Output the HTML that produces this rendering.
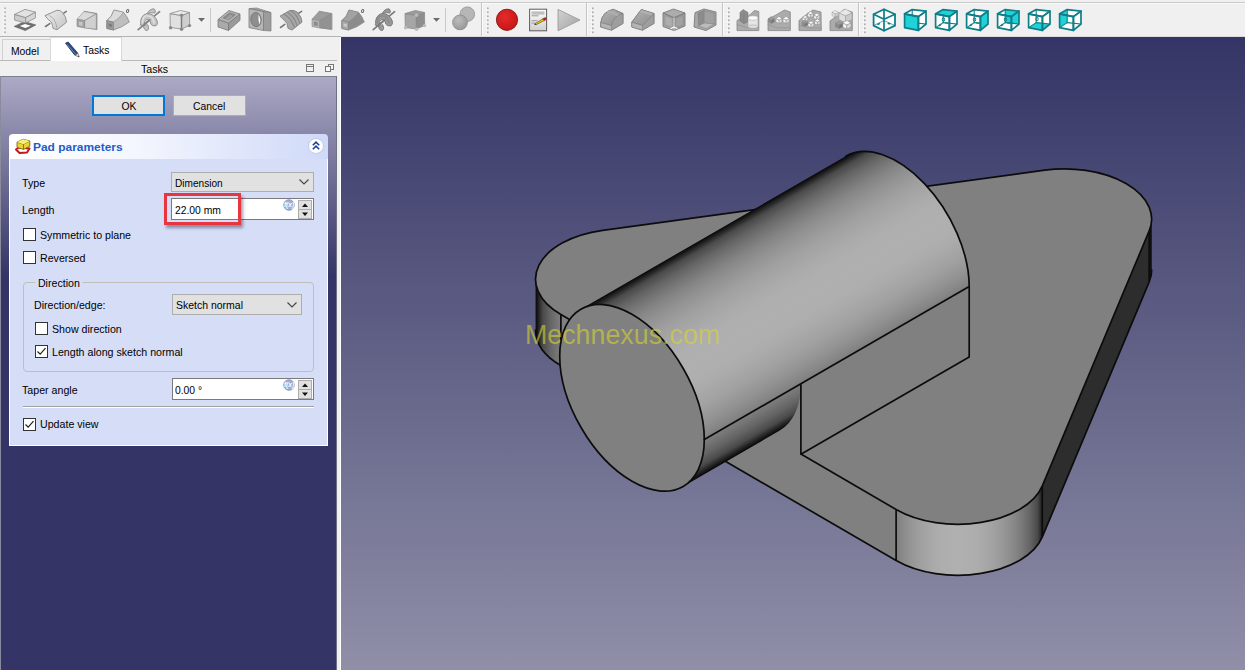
<!DOCTYPE html>
<html lang="en"><head><meta charset="utf-8"><title>FreeCAD - Pad parameters</title>
<style>
html,body{margin:0;padding:0}
body{width:1245px;height:670px;overflow:hidden;position:relative;background:#f0f0f0;font-family:"Liberation Sans",sans-serif;font-size:11px;color:#000}
.abs{position:absolute}
#toolbar{left:0;top:0;width:1245px;height:36px;background:#f0f0f0}
#tbline{left:0;top:36px;width:341px;height:1px;background:#b4b4b4}
#tbline2{left:341px;top:36px;width:904px;height:1px;background:#dcdcdc}
#view{left:341px;top:37px;width:904px;height:633px;background:linear-gradient(#343466,#8f8fa8)}
#panel{left:0;top:76px;width:337px;height:594px;background:linear-gradient(#acaac5 0px,#343466 200px,#343466 100%)}
</style></head><body>
<style>
.btn{background:#e1e1e1;text-align:center;line-height:18px;box-sizing:content-box}
.combo{background:#e1e1e1;border:1px solid #adadad}
.spin{background:#fff;border:1px solid #7a7a7a}
.sbtn{width:12px;height:8px;background:#e1e1e1;border:1px solid #adadad;line-height:0}
.cb{width:11px;height:11px;background:#fff;border:1px solid #333;line-height:0}
.abs span{white-space:nowrap}
div.abs{white-space:nowrap}
.t{transform:scaleX(.967);transform-origin:0 50%}
span.t{transform:scaleX(.94)}
.tc{display:inline-block;transform:scaleX(.94)}
</style>
<div id="toolbar" class="abs"></div>
<div id="tbline" class="abs"></div><div id="tbline2" class="abs"></div>
<!-- tabs -->
<div class="abs" style="left:0;top:60px;width:337px;height:1px;background:#b9b9b9"></div>
<div class="abs tab" style="left:2px;top:39px;width:47px;height:20px;background:#f0f0f0;border:1px solid #d0d0d0;border-bottom:none"><span class="abs t" style="left:8px;top:5px">Model</span></div>
<div class="abs tab" style="left:50px;top:37px;width:70px;height:23px;background:#fff;border:1px solid #d9d9d9;border-bottom:none"><span class="abs t" style="left:32px;top:6px">Tasks</span>
<svg class="abs" style="left:12px;top:3px" width="18" height="18" viewBox="0 0 18 18"><path d="M2.5 2.2 L5.2 1 L14.8 12.2 L12 14.4 Z" fill="#2f4b7c" stroke="#1b2c4f" stroke-width=".8"/><path d="M12 14.4 L14.8 12.2 L16.3 16 Z" fill="#e9e1cf" stroke="#555" stroke-width=".6"/><path d="M15.2 14.6 L16.3 16 L14.8 15.6Z" fill="#222"/><path d="M4 3.2 L12.8 13.4" stroke="#6d8cc2" stroke-width=".9"/></svg></div>
<!-- dock title -->
<div class="abs t" style="left:141px;top:63px;width:40px;text-align:left">Tasks</div>
<svg class="abs" style="left:304px;top:62px" width="32" height="12" viewBox="0 0 32 12"><rect x="2.5" y="2.5" width="7" height="7" fill="none" stroke="#777" stroke-width="1"/><path d="M2.5 4.5H9.5" stroke="#777"/><rect x="24.5" y="2.5" width="5" height="5" fill="#f4f4f4" stroke="#777"/><rect x="21.5" y="4.5" width="5" height="5" fill="#f8f8f8" stroke="#777"/></svg>
<!-- task panel -->
<div id="panel" class="abs"></div>
<div class="abs" style="left:0;top:76px;width:337px;height:1px;background:#7c7f8c"></div>
<div class="abs" style="left:0;top:76px;width:1px;height:594px;background:#8a8c9c"></div>
<div class="abs" style="left:336px;top:76px;width:1px;height:594px;background:#6f7285"></div>
<div class="abs" style="left:340px;top:37px;width:1px;height:633px;background:#fff"></div>
<!-- buttons -->
<div class="abs btn" style="left:92px;top:95px;width:69px;height:17px;border:2px solid #0078d7"><span class="tc">OK</span></div>
<div class="abs btn" style="left:173px;top:95px;width:71px;height:19px;line-height:20px;border:1px solid #adadad"><span class="tc">Cancel</span></div>
<!-- pad box -->
<div class="abs" style="left:9px;top:134px;width:319px;height:25px;border-radius:4px 4px 0 0;background:linear-gradient(90deg,#ffffff,#f4f6fe 40%,#cfd9f8)"></div>
<div class="abs" style="left:9px;top:159px;width:317px;height:286px;background:#d6def7;border:1px solid #fff;border-top:none"></div>
<div class="abs" style="left:33px;top:141px;font-weight:bold;color:#215dc6;transform:scaleX(1.085);transform-origin:0 50%">Pad parameters</div>
<svg class="abs" style="left:14px;top:137px" width="18" height="18" viewBox="0 0 18 18"><path d="M2 12.5 L5 10.5 L15.5 11.5 L13 15.5 L5.5 16 Z" fill="none" stroke="#c4161c" stroke-width="2" stroke-linejoin="round"/><path d="M3 5.2 L9 2.2 L15.8 4 L15.8 9.2 L9.5 12.4 L3 10.4Z" fill="#e8d435" stroke="#6b5d06" stroke-width=".8" stroke-linejoin="round"/><path d="M3 5.2 L9.5 7.2 L15.8 4 M9.5 7.2V12.4" fill="none" stroke="#6b5d06" stroke-width=".8"/><path d="M3 5.2 L9 2.2 L15.8 4 L9.5 7.2Z" fill="#f7ee7a"/></svg>
<svg class="abs" style="left:307px;top:137px" width="18" height="18" viewBox="0 0 18 18"><circle cx="9" cy="9" r="7.5" fill="#fff" stroke="#c3cbe6" stroke-width="1"/><path d="M5.8 8.3 L9 5.2 L12.2 8.3 M5.8 12.3 L9 9.2 L12.2 12.3" fill="none" stroke="#1c3fa0" stroke-width="1.6"/></svg>
<div class="abs t" style="left:22px;top:177px">Type</div>
<div class="abs t" style="left:22px;top:204px">Length</div>
<div class="abs combo" style="left:171px;top:172px;width:141px;height:18px"><span class="abs t" style="left:3px;top:4px;transform:scaleX(.918)">Dimension</span><svg class="abs" style="right:3px;top:5px" width="12" height="8" viewBox="0 0 12 8"><path d="M1.5 1.5 L6 6 L10.5 1.5" fill="none" stroke="#444" stroke-width="1.1"/></svg></div>
<div class="abs spin" style="left:171px;top:198px;width:141px;height:20px"><span class="abs t" style="left:3px;top:5px">22.00 mm</span></div>
<div class="abs sbtn" style="left:298px;top:200px"><svg width="12" height="8" viewBox="0 0 12 8"><path d="M3 6 L6 2.5 L9 6Z" fill="#111"/></svg></div>
<div class="abs sbtn" style="left:298px;top:209px"><svg width="12" height="8" viewBox="0 0 12 8"><path d="M3 2.5 L6 6 L9 2.5Z" fill="#111"/></svg></div>
<svg class="abs" style="left:283px;top:199px" width="12" height="12" viewBox="0 0 12 12"><circle cx="6" cy="6" r="5.3" fill="#9fb0d8" stroke="#7f8fb8" stroke-width=".8"/><text x="6" y="8.3" font-size="6.5" font-style="italic" font-weight="bold" text-anchor="middle" fill="#fff" font-family="Liberation Sans, sans-serif">f(x)</text></svg>
<div class="abs" style="left:164px;top:193px;width:71px;height:26px;border:3px solid #e9353f;box-shadow:2px 3px 3px rgba(40,40,60,.45)"></div>
<div class="abs cb" style="left:23px;top:228px"></div><div class="abs t" style="left:40px;top:229px">Symmetric to plane</div>
<div class="abs cb" style="left:23px;top:251px"></div><div class="abs t" style="left:40px;top:252px">Reversed</div>
<!-- group -->
<div class="abs" style="left:23px;top:282px;width:289px;height:88px;border:1px solid #bfbfb8;border-radius:4px"></div>
<div class="abs t" style="left:35px;top:277px;background:#d6def7;padding:0 3px">Direction</div>
<div class="abs t" style="left:34px;top:299px">Direction/edge:</div>
<div class="abs combo" style="left:172px;top:294px;width:128px;height:19px"><span class="abs t" style="left:3px;top:4px;transform:scaleX(.953)">Sketch normal</span><svg class="abs" style="right:3px;top:6px" width="12" height="8" viewBox="0 0 12 8"><path d="M1.5 1.5 L6 6 L10.5 1.5" fill="none" stroke="#444" stroke-width="1.1"/></svg></div>
<div class="abs cb" style="left:35px;top:322px"></div><div class="abs t" style="left:52px;top:323px">Show direction</div>
<div class="abs cb" style="left:35px;top:345px"><svg width="11" height="11" viewBox="0 0 11 11"><path d="M1.5 5.5 L4.2 8.2 L9.5 2.2" fill="none" stroke="#222" stroke-width="1.2"/></svg></div><div class="abs t" style="left:52px;top:346px">Length along sketch normal</div>
<div class="abs t" style="left:22px;top:384px">Taper angle</div>
<div class="abs spin" style="left:172px;top:378px;width:140px;height:20px"><span class="abs t" style="left:2px;top:5px">0.00 °</span></div>
<div class="abs sbtn" style="left:298px;top:380px"><svg width="12" height="8" viewBox="0 0 12 8"><path d="M3 6 L6 2.5 L9 6Z" fill="#111"/></svg></div>
<div class="abs sbtn" style="left:298px;top:389px"><svg width="12" height="8" viewBox="0 0 12 8"><path d="M3 2.5 L6 6 L9 2.5Z" fill="#111"/></svg></div>
<svg class="abs" style="left:283px;top:379px" width="12" height="12" viewBox="0 0 12 12"><circle cx="6" cy="6" r="5.3" fill="#9fb0d8" stroke="#7f8fb8" stroke-width=".8"/><text x="6" y="8.3" font-size="6.5" font-style="italic" font-weight="bold" text-anchor="middle" fill="#fff" font-family="Liberation Sans, sans-serif">f(x)</text></svg>
<div class="abs" style="left:23px;top:406px;width:291px;height:1px;background:#a0a0a0"></div>
<div class="abs" style="left:23px;top:407px;width:291px;height:1px;background:#fff"></div>
<div class="abs cb" style="left:23px;top:418px"><svg width="11" height="11" viewBox="0 0 11 11"><path d="M1.5 5.5 L4.2 8.2 L9.5 2.2" fill="none" stroke="#222" stroke-width="1.2"/></svg></div><div class="abs t" style="left:40px;top:418px">Update view</div>
<svg class="abs" style="left:0;top:0" width="1245" height="37" viewBox="0 0 1245 37">
<defs><linearGradient id="lg1" x1="0" y1="0" x2="1" y2="1"><stop offset="0" stop-color="#ececec"/><stop offset="1" stop-color="#c4c4c4"/></linearGradient><linearGradient id="dg1" x1="0" y1="0" x2="1" y2="1"><stop offset="0" stop-color="#b4b4b4"/><stop offset="1" stop-color="#8c8c8c"/></linearGradient><radialGradient id="sph" cx=".4" cy=".35" r=".7"><stop offset="0" stop-color="#bdbdbd"/><stop offset="1" stop-color="#969696"/></radialGradient><radialGradient id="red" cx=".4" cy=".35" r=".75"><stop offset="0" stop-color="#e52a2a"/><stop offset="1" stop-color="#c41414"/></radialGradient><linearGradient id="doc" x1="0" y1="0" x2="0" y2="1"><stop offset="0" stop-color="#ffffff"/><stop offset="1" stop-color="#cfcfcf"/></linearGradient><linearGradient id="ply" x1="0" y1="0" x2="1" y2="1"><stop offset="0" stop-color="#d2d2d2"/><stop offset="1" stop-color="#a2a2a2"/></linearGradient></defs>
<rect x="0" y="2" width="1245" height="1" fill="#c9c9c9"/><rect x="0" y="3" width="1245" height="1" fill="#fafafa"/>
<rect x="4.2" y="7.5" width="1.6" height="1.6" fill="#a8a8a8"/>
<rect x="3.0" y="8.8" width="1.3" height="1.3" fill="#ffffff"/>
<rect x="4.2" y="11.5" width="1.6" height="1.6" fill="#a8a8a8"/>
<rect x="3.0" y="12.8" width="1.3" height="1.3" fill="#ffffff"/>
<rect x="4.2" y="15.5" width="1.6" height="1.6" fill="#a8a8a8"/>
<rect x="3.0" y="16.8" width="1.3" height="1.3" fill="#ffffff"/>
<rect x="4.2" y="19.5" width="1.6" height="1.6" fill="#a8a8a8"/>
<rect x="3.0" y="20.8" width="1.3" height="1.3" fill="#ffffff"/>
<rect x="4.2" y="23.5" width="1.6" height="1.6" fill="#a8a8a8"/>
<rect x="3.0" y="24.8" width="1.3" height="1.3" fill="#ffffff"/>
<rect x="4.2" y="27.5" width="1.6" height="1.6" fill="#a8a8a8"/>
<rect x="3.0" y="28.8" width="1.3" height="1.3" fill="#ffffff"/>
<rect x="4.2" y="31.5" width="1.6" height="1.6" fill="#a8a8a8"/>
<rect x="3.0" y="32.8" width="1.3" height="1.3" fill="#ffffff"/>
<polygon points="14.2,26.4 24.5,21.5 35.8,24.9 25.3,30.6" fill="#6e6e6e" stroke="#5c5c5c" stroke-width="0.6" stroke-linejoin="round"/>
<polygon points="19.8,25.9 25.0,24.0 30.8,25.7 25.3,27.9" fill="#ffffff"/>
<polygon points="14.6,14.4 25.7,17.5 25.7,22.9 14.6,20.2" fill="#cdcdcd" stroke="#8a8a8a" stroke-width="0.8" stroke-linejoin="round"/>
<polygon points="25.7,17.5 35.4,12.1 35.4,17.9 25.7,22.9" fill="#d6d6d6" stroke="#8a8a8a" stroke-width="0.8" stroke-linejoin="round"/>
<polygon points="14.6,14.4 25.0,9.4 35.4,12.1 25.7,17.5" fill="#e2e2e2" stroke="#8a8a8a" stroke-width="0.8" stroke-linejoin="round"/>
<line x1="45.5" y1="26.5" x2="49.8" y2="23.6" stroke="#777" stroke-width="1.6" stroke-linecap="round"/>
<line x1="63.5" y1="13.3" x2="66.3" y2="11.4" stroke="#777" stroke-width="1.6" stroke-linecap="round"/>
<path d="M45.3,15.6 L57.0,10.2 Q60.5,10 62.5,12.5 Q66.5,17 66.5,22.3 L57.0,29.8 L53.0,28.3 Q52.5,22 49.0,20 Z" fill="url(#lg1)" stroke="#8a8a8a" stroke-width="0.9" stroke-linejoin="round" stroke-linecap="round"/>
<path d="M49.5,15.6 Q55.5,18 57.0,28.3" fill="none" stroke="#9a9a9a" stroke-width="0.7" stroke-linejoin="round" stroke-linecap="round"/>
<path d="M45.3,15.6 L49.5,13.5" fill="none" stroke="#9a9a9a" stroke-width="0.7" stroke-linejoin="round" stroke-linecap="round"/>
<polygon points="84.0,11.2 97.0,13.5 97.0,29.6 84.5,27.5" fill="#9c9c9c" stroke="#8a8a8a" stroke-width="0.7" stroke-linejoin="round"/>
<polygon points="77.0,19.2 84.0,11.5 96.3,13.8 84.6,20.6" fill="#dadada" stroke="#8a8a8a" stroke-width="0.6" stroke-linejoin="round"/>
<polygon points="84.6,20.6 96.3,13.8 96.3,29.2 84.6,28.0" fill="#d0d0d0" stroke="#8a8a8a" stroke-width="0.6" stroke-linejoin="round"/>
<polygon points="77.0,19.2 84.6,20.6 84.6,28.0 77.0,26.5" fill="#a2a2a2" stroke="#8a8a8a" stroke-width="0.6" stroke-linejoin="round"/>
<polygon points="79.0,21.5 82.6,22.2 82.6,26.0 79.0,25.3" fill="#c6c6c6"/>
<path d="M107.0,20.5 Q112.0,17 114.0,10 L123.5,12.3 Q127.0,16 129.3,22 Q122.0,27.5 113.5,30 L107.0,28.5 Z" fill="#bebebe" stroke="#8a8a8a" stroke-width="0.8" stroke-linejoin="round" stroke-linecap="round"/>
<path d="M107.0,20.5 Q112.0,17 114.0,10 L123.5,12.3 Q120.0,18 113.5,22 Z" fill="#dcdcdc" stroke="#8a8a8a" stroke-width="0.6" stroke-linejoin="round" stroke-linecap="round"/>
<polygon points="107.0,20.5 113.5,22.0 113.5,30.0 107.0,28.5" fill="#9a9a9a" stroke="#7e7e7e" stroke-width="0.6" stroke-linejoin="round"/>
<polygon points="108.6,23.6 111.8,24.3 111.8,27.0 108.6,26.3" fill="#7a7a7a"/>
<ellipse cx="127.6" cy="11.0" rx="1.1" ry="1.6" fill="none" stroke="#666" stroke-width="1" transform="rotate(20 127.6 11.0)"/>
<path d="M147.4,13.5 Q149.0,9 154.0,8.8 Q156.0,10 155.0,13 Q151.0,12 147.4,13.5Z" fill="#c4c4c4" stroke="#8c8c8c" stroke-width="0.9" stroke-linejoin="round" stroke-linecap="round"/>
<line x1="138.2" y1="29.6" x2="159.6" y2="11.7" stroke="#828282" stroke-width="1.7" stroke-linecap="round"/>
<path d="M140.7,25 Q139.5,16 146.5,13.6 Q154.0,13 157.3,21 Q158.0,24.5 156.0,25.8 Q152.0,26.5 150.7,24 Q150.5,19.5 146.5,19.5 Q144.0,21 143.8,25.6 Q142.0,26.5 140.7,25Z" fill="#c4c4c4" stroke="#8c8c8c" stroke-width="0.9" stroke-linejoin="round" stroke-linecap="round"/>
<path d="M142.3,23 Q142.5,15.5 147.5,15.8 Q153.0,16 154.0,23" fill="none" stroke="#e0e0e0" stroke-width="1.6" stroke-linejoin="round" stroke-linecap="round"/>
<path d="M143.5,26.2 Q144.0,30.5 147.0,30.5 Q149.8,29.5 147.8,25 Z" fill="#c4c4c4" stroke="#8c8c8c" stroke-width="0.9" stroke-linejoin="round" stroke-linecap="round"/>
<line x1="143.3" y1="25.3" x2="149.8" y2="19.9" stroke="#828282" stroke-width="1.7" stroke-linecap="round"/>
<polygon points="170.0,13.6 181.5,15.5 181.5,29.0 170.3,27.5" fill="#e0e0e0" stroke="#8c8c8c" stroke-width="0.8" stroke-linejoin="round"/>
<polygon points="181.5,15.5 189.5,12.5 189.7,25.4 181.5,29.0" fill="#cecece" stroke="#8c8c8c" stroke-width="0.8" stroke-linejoin="round"/>
<polygon points="170.0,13.6 180.5,10.5 189.5,12.5 181.5,15.5" fill="#ebebeb" stroke="#8c8c8c" stroke-width="0.8" stroke-linejoin="round"/>
<line x1="181.5" y1="15.5" x2="181.5" y2="29.0" stroke="#7c7c7c" stroke-width="1.5" stroke-linecap="round"/>
<circle cx="181.5" cy="15.2" r="1.7" fill="#8a8a8a"/>
<circle cx="170.6" cy="27.7" r="1.7" fill="#8a8a8a"/>
<circle cx="181.6" cy="29.2" r="1.7" fill="#8a8a8a"/>
<circle cx="189.5" cy="25.6" r="1.7" fill="#8a8a8a"/>
<polygon points="198.0,18.0 205.0,18.0 201.5,21.8" fill="#6a6a6a"/>
<rect x="210.0" y="8" width="1" height="24" fill="#c8c8c8"/>
<polygon points="218.0,19.5 228.5,23.0 228.5,30.5 218.0,27.0" fill="#aaaaaa" stroke="#7a7a7a" stroke-width="0.8" stroke-linejoin="round"/>
<polygon points="228.5,23.0 240.0,14.0 240.0,20.3 228.5,30.5" fill="#9a9a9a" stroke="#7a7a7a" stroke-width="0.8" stroke-linejoin="round"/>
<polygon points="218.0,19.5 229.0,10.5 240.0,14.0 228.5,23.0" fill="#b2b2b2" stroke="#7a7a7a" stroke-width="0.8" stroke-linejoin="round"/>
<polygon points="223.2,18.0 229.5,12.9 235.2,14.7 229.0,19.8" fill="#8c8c8c" stroke="#767676" stroke-width="0.6" stroke-linejoin="round"/>
<polygon points="225.5,18.6 230.2,14.8 233.0,15.7 229.0,19.8" fill="#a0a0a0"/>
<polygon points="249.0,8.6 256.5,8.0 271.0,12.6 263.5,11.6" fill="#a6a6a6" stroke="#7c7c7c" stroke-width="0.7" stroke-linejoin="round"/>
<polygon points="263.5,11.6 271.0,12.6 271.0,31.0 263.5,30.5" fill="#9c9c9c" stroke="#7c7c7c" stroke-width="0.7" stroke-linejoin="round"/>
<polygon points="249.0,8.6 263.5,11.6 263.5,30.5 249.0,27.6" fill="#b6b6b6" stroke="#7c7c7c" stroke-width="0.8" stroke-linejoin="round"/>
<ellipse cx="256.0" cy="19.6" rx="5.2" ry="7.1" fill="#8e8e8e" stroke="#707070" stroke-width="0.8" transform="rotate(-6 256.0 19.6)"/>
<path d="M258.5,14.5 Q261.5,19.5 259.5,24.5 Q258,20 258.5,14.5Z" fill="#ffffff"/>
<line x1="280.5" y1="27.5" x2="284.8" y2="24.4" stroke="#777" stroke-width="1.6" stroke-linecap="round"/>
<line x1="298.5" y1="13.3" x2="301.6" y2="11.3" stroke="#777" stroke-width="1.6" stroke-linecap="round"/>
<path d="M280.3,16 L290.0,10.4 Q294.5,10 297.0,12 Q302.0,17 302.0,22 L292.0,30 L288.0,28.3 Q288.0,23 284.5,20.5 Z" fill="#a8a8a8" stroke="#808080" stroke-width="0.9" stroke-linejoin="round" stroke-linecap="round"/>
<path d="M284.0,14 Q291.0,18 294.5,27.5 M287.5,12.3 Q294.5,17 297.0,25.5 M291.0,11 Q298.0,15 299.7,23.5" fill="none" stroke="#888" stroke-width="1.1" stroke-linejoin="round" stroke-linecap="round"/>
<polygon points="319.0,11.2 332.0,13.5 332.0,29.6 319.5,27.5" fill="#bdbdbd" stroke="#8a8a8a" stroke-width="0.7" stroke-linejoin="round"/>
<polygon points="312.0,19.2 319.0,11.5 331.3,13.8 319.6,20.6" fill="#9c9c9c" stroke="#8a8a8a" stroke-width="0.6" stroke-linejoin="round"/>
<polygon points="319.6,20.6 331.3,13.8 331.3,29.2 319.6,28.0" fill="#929292" stroke="#8a8a8a" stroke-width="0.6" stroke-linejoin="round"/>
<polygon points="312.0,19.2 319.6,20.6 319.6,28.0 312.0,26.5" fill="#b2b2b2" stroke="#8a8a8a" stroke-width="0.6" stroke-linejoin="round"/>
<polygon points="314.0,21.5 317.6,22.2 317.6,26.0 314.0,25.3" fill="#8a8a8a"/>
<path d="M342.0,20.5 Q347.0,17 349.0,10 L358.5,12.3 Q362.0,16 364.3,22 Q357.0,27.5 348.5,30 L342.0,28.5 Z" fill="#8c8c8c" stroke="#8a8a8a" stroke-width="0.8" stroke-linejoin="round" stroke-linecap="round"/>
<path d="M342.0,20.5 Q347.0,17 349.0,10 L358.5,12.3 Q355.0,18 348.5,22 Z" fill="#a2a2a2" stroke="#8a8a8a" stroke-width="0.6" stroke-linejoin="round" stroke-linecap="round"/>
<polygon points="342.0,20.5 348.5,22.0 348.5,30.0 342.0,28.5" fill="#a8a8a8" stroke="#7e7e7e" stroke-width="0.6" stroke-linejoin="round"/>
<polygon points="343.6,23.6 346.8,24.3 346.8,27.0 343.6,26.3" fill="#cacaca"/>
<ellipse cx="362.6" cy="11.0" rx="1.1" ry="1.6" fill="none" stroke="#666" stroke-width="1" transform="rotate(20 362.6 11.0)"/>
<path d="M382.4,13.5 Q384.0,9 389.0,8.8 Q391.0,10 390.0,13 Q386.0,12 382.4,13.5Z" fill="#9a9a9a" stroke="#747474" stroke-width="0.9" stroke-linejoin="round" stroke-linecap="round"/>
<line x1="373.2" y1="29.6" x2="394.6" y2="11.7" stroke="#7c7c7c" stroke-width="1.7" stroke-linecap="round"/>
<path d="M375.7,25 Q374.5,16 381.5,13.6 Q389.0,13 392.3,21 Q393.0,24.5 391.0,25.8 Q387.0,26.5 385.7,24 Q385.5,19.5 381.5,19.5 Q379.0,21 378.8,25.6 Q377.0,26.5 375.7,25Z" fill="#9a9a9a" stroke="#747474" stroke-width="0.9" stroke-linejoin="round" stroke-linecap="round"/>
<path d="M377.3,23 Q377.5,15.5 382.5,15.8 Q388.0,16 389.0,23" fill="none" stroke="#8a8a8a" stroke-width="1.6" stroke-linejoin="round" stroke-linecap="round"/>
<path d="M378.5,26.2 Q379.0,30.5 382.0,30.5 Q384.8,29.5 382.8,25 Z" fill="#9a9a9a" stroke="#747474" stroke-width="0.9" stroke-linejoin="round" stroke-linecap="round"/>
<line x1="378.3" y1="25.3" x2="384.8" y2="19.9" stroke="#7c7c7c" stroke-width="1.7" stroke-linecap="round"/>
<polygon points="405.0,13.6 416.5,15.5 416.5,29.0 405.3,27.5" fill="#a6a6a6" stroke="#8a8a8a" stroke-width="0.8" stroke-linejoin="round"/>
<polygon points="416.5,15.5 424.5,12.5 424.7,25.4 416.5,29.0" fill="#8e8e8e" stroke="#8a8a8a" stroke-width="0.8" stroke-linejoin="round"/>
<polygon points="405.0,13.6 415.5,10.5 424.5,12.5 416.5,15.5" fill="#9c9c9c" stroke="#8a8a8a" stroke-width="0.8" stroke-linejoin="round"/>
<line x1="416.5" y1="15.5" x2="416.5" y2="29.0" stroke="#8a8a8a" stroke-width="1.5" stroke-linecap="round"/>
<circle cx="416.5" cy="15.2" r="1.7" fill="#bcbcbc"/>
<circle cx="405.6" cy="27.7" r="1.7" fill="#bcbcbc"/>
<circle cx="416.6" cy="29.2" r="1.7" fill="#bcbcbc"/>
<circle cx="424.5" cy="25.6" r="1.7" fill="#bcbcbc"/>
<polygon points="433.0,18.0 440.0,18.0 436.5,21.8" fill="#6a6a6a"/>
<rect x="445.0" y="8" width="1" height="24" fill="#c8c8c8"/>
<circle cx="467.3" cy="14.2" r="7.3" fill="#b6b6b6" stroke="#909090" stroke-width="0.8"/>
<circle cx="460.0" cy="22.4" r="7.4" fill="url(#sph)" stroke="#8a8a8a" stroke-width="0.8"/>
<rect x="481.0" y="3" width="1" height="33" fill="#c4c4c4"/><rect x="482.0" y="3" width="1" height="33" fill="#fbfbfb"/>
<rect x="487.0" y="7.5" width="1.6" height="1.6" fill="#a8a8a8"/>
<rect x="485.8" y="8.8" width="1.3" height="1.3" fill="#ffffff"/>
<rect x="487.0" y="11.5" width="1.6" height="1.6" fill="#a8a8a8"/>
<rect x="485.8" y="12.8" width="1.3" height="1.3" fill="#ffffff"/>
<rect x="487.0" y="15.5" width="1.6" height="1.6" fill="#a8a8a8"/>
<rect x="485.8" y="16.8" width="1.3" height="1.3" fill="#ffffff"/>
<rect x="487.0" y="19.5" width="1.6" height="1.6" fill="#a8a8a8"/>
<rect x="485.8" y="20.8" width="1.3" height="1.3" fill="#ffffff"/>
<rect x="487.0" y="23.5" width="1.6" height="1.6" fill="#a8a8a8"/>
<rect x="485.8" y="24.8" width="1.3" height="1.3" fill="#ffffff"/>
<rect x="487.0" y="27.5" width="1.6" height="1.6" fill="#a8a8a8"/>
<rect x="485.8" y="28.8" width="1.3" height="1.3" fill="#ffffff"/>
<rect x="487.0" y="31.5" width="1.6" height="1.6" fill="#a8a8a8"/>
<rect x="485.8" y="32.8" width="1.3" height="1.3" fill="#ffffff"/>
<circle cx="507.0" cy="19.8" r="10.6" fill="url(#red)" stroke="#7e1a12" stroke-width="0.9"/>
<rect x="529.6" y="9.2" width="17" height="21.6" fill="url(#doc)" stroke="#5c5c5c" stroke-width="1"/>
<rect x="531.5" y="11.6" width="13" height="1" fill="#9c9c9c"/>
<rect x="531.5" y="13.4" width="13" height="1" fill="#9c9c9c"/>
<rect x="531.5" y="15.3" width="7" height="1" fill="#9c9c9c"/>
<rect x="531.5" y="20.2" width="6" height="1" fill="#9c9c9c"/>
<rect x="531.5" y="22.6" width="4" height="1" fill="#9c9c9c"/>
<path d="M535.2,23.6 L543.2,18.6 L544.4,20.4 L536.4,24.6 Z" fill="#e9c81e" stroke="#54440a" stroke-width="0.6" stroke-linejoin="round" stroke-linecap="round"/>
<path d="M543.2,18.6 L545.3,17.6 Q546.6,18.6 545.8,19.8 L544.4,20.4Z" fill="#d02020" stroke="#6a1010" stroke-width="0.5" stroke-linejoin="round" stroke-linecap="round"/>
<path d="M535.2,23.6 L536.4,24.6 L534,25.2Z" fill="#333"/>
<polygon points="558.0,9.4 580.0,20.0 558.0,30.8" fill="url(#ply)" stroke="#9c9c9c" stroke-width="0.9" stroke-linejoin="round"/>
<rect x="586.0" y="3" width="1" height="33" fill="#c4c4c4"/><rect x="587.0" y="3" width="1" height="33" fill="#fbfbfb"/>
<rect x="592.0" y="7.5" width="1.6" height="1.6" fill="#a8a8a8"/>
<rect x="590.8" y="8.8" width="1.3" height="1.3" fill="#ffffff"/>
<rect x="592.0" y="11.5" width="1.6" height="1.6" fill="#a8a8a8"/>
<rect x="590.8" y="12.8" width="1.3" height="1.3" fill="#ffffff"/>
<rect x="592.0" y="15.5" width="1.6" height="1.6" fill="#a8a8a8"/>
<rect x="590.8" y="16.8" width="1.3" height="1.3" fill="#ffffff"/>
<rect x="592.0" y="19.5" width="1.6" height="1.6" fill="#a8a8a8"/>
<rect x="590.8" y="20.8" width="1.3" height="1.3" fill="#ffffff"/>
<rect x="592.0" y="23.5" width="1.6" height="1.6" fill="#a8a8a8"/>
<rect x="590.8" y="24.8" width="1.3" height="1.3" fill="#ffffff"/>
<rect x="592.0" y="27.5" width="1.6" height="1.6" fill="#a8a8a8"/>
<rect x="590.8" y="28.8" width="1.3" height="1.3" fill="#ffffff"/>
<rect x="592.0" y="31.5" width="1.6" height="1.6" fill="#a8a8a8"/>
<rect x="590.8" y="32.8" width="1.3" height="1.3" fill="#ffffff"/>
<path d="M600.8,22.5 Q602.3,11.5 613.3,9.3 L623.1,13.6 L623.1,23.5 L611.6,30.2 L600.8,27Z" fill="#9e9e9e" stroke="#7c7c7c" stroke-width="0.9" stroke-linejoin="round" stroke-linecap="round"/>
<path d="M600.8,22.5 Q602.3,11.5 613.3,9.3 L623.1,13.6 Q612.8,15.5 611.6,25.5Z" fill="url(#dg1)" stroke="#7c7c7c" stroke-width="0.6" stroke-linejoin="round" stroke-linecap="round"/>
<polygon points="600.8,22.5 611.6,25.5 611.6,30.2 600.8,27.0" fill="#b4b4b4" stroke="#7c7c7c" stroke-width="0.6" stroke-linejoin="round"/>
<polygon points="606.3,11.8 609.3,10.3 619.6,14.4 616.8,16.0" fill="#aeaeae"/>
<polygon points="631.8,22.2 641.3,9.5 654.1,13.6 654.1,23.5 642.6,30.2 631.8,27.0" fill="#9e9e9e" stroke="#7c7c7c" stroke-width="0.9" stroke-linejoin="round"/>
<polygon points="631.8,22.2 641.3,9.5 654.1,13.6 642.6,25.5" fill="url(#dg1)" stroke="#7c7c7c" stroke-width="0.6" stroke-linejoin="round"/>
<polygon points="631.8,22.2 642.6,25.5 642.6,30.2 631.8,27.0" fill="#b4b4b4" stroke="#7c7c7c" stroke-width="0.6" stroke-linejoin="round"/>
<polygon points="639.6,11.8 641.6,9.9 652.8,13.6 650.8,15.5" fill="#b0b0b0"/>
<polygon points="663.0,13.0 674.0,17.6 674.0,30.6 663.0,26.5" fill="#a4a4a4" stroke="#7c7c7c" stroke-width="0.9" stroke-linejoin="round"/>
<polygon points="674.0,17.6 685.0,13.0 685.0,26.0 674.0,30.6" fill="#9a9a9a" stroke="#7c7c7c" stroke-width="0.9" stroke-linejoin="round"/>
<polygon points="663.0,13.0 673.5,9.0 685.0,13.0 674.0,17.6" fill="#acacac" stroke="#7c7c7c" stroke-width="0.9" stroke-linejoin="round"/>
<polygon points="665.0,15.5 672.3,18.6 672.3,27.6 665.0,25.0" fill="#aeaeae" stroke="#8a8a8a" stroke-width="0.5" stroke-linejoin="round"/>
<polygon points="675.7,18.6 683.0,15.5 683.0,25.0 675.7,27.6" fill="#a2a2a2" stroke="#8a8a8a" stroke-width="0.5" stroke-linejoin="round"/>
<line x1="674.0" y1="18.0" x2="674.0" y2="30.0" stroke="#d6d6d6" stroke-width="1.2" stroke-linecap="round"/>
<path d="M671.0,28.5 L674.0,27 L677.0,28.5" fill="none" stroke="#ffffff" stroke-width="1.1" stroke-linejoin="round" stroke-linecap="round"/>
<polygon points="695.0,12.6 704.0,9.0 716.0,12.0 716.0,25.0 706.0,30.6 694.0,27.0" fill="#a8a8a8" stroke="#7c7c7c" stroke-width="0.9" stroke-linejoin="round"/>
<polygon points="698.0,13.0 704.2,10.6 704.2,23.0 698.5,26.0" fill="#8c8c8c" stroke="#7a7a7a" stroke-width="0.5" stroke-linejoin="round"/>
<polygon points="704.2,10.6 714.3,13.0 714.3,24.0 704.2,23.0" fill="#a0a0a0" stroke="#808080" stroke-width="0.5" stroke-linejoin="round"/>
<polygon points="698.5,26.0 704.2,23.0 714.3,24.0 706.3,28.5" fill="#bcbcbc" stroke="#808080" stroke-width="0.5" stroke-linejoin="round"/>
<rect x="722.0" y="3" width="1" height="33" fill="#c4c4c4"/><rect x="723.0" y="3" width="1" height="33" fill="#fbfbfb"/>
<rect x="728.0" y="7.5" width="1.6" height="1.6" fill="#a8a8a8"/>
<rect x="726.8" y="8.8" width="1.3" height="1.3" fill="#ffffff"/>
<rect x="728.0" y="11.5" width="1.6" height="1.6" fill="#a8a8a8"/>
<rect x="726.8" y="12.8" width="1.3" height="1.3" fill="#ffffff"/>
<rect x="728.0" y="15.5" width="1.6" height="1.6" fill="#a8a8a8"/>
<rect x="726.8" y="16.8" width="1.3" height="1.3" fill="#ffffff"/>
<rect x="728.0" y="19.5" width="1.6" height="1.6" fill="#a8a8a8"/>
<rect x="726.8" y="20.8" width="1.3" height="1.3" fill="#ffffff"/>
<rect x="728.0" y="23.5" width="1.6" height="1.6" fill="#a8a8a8"/>
<rect x="726.8" y="24.8" width="1.3" height="1.3" fill="#ffffff"/>
<rect x="728.0" y="27.5" width="1.6" height="1.6" fill="#a8a8a8"/>
<rect x="726.8" y="28.8" width="1.3" height="1.3" fill="#ffffff"/>
<rect x="728.0" y="31.5" width="1.6" height="1.6" fill="#a8a8a8"/>
<rect x="726.8" y="32.8" width="1.3" height="1.3" fill="#ffffff"/>
<polygon points="737.0,20.5 741.5,18.0 741.5,12.0 748.5,16.0 754.5,10.5 758.8,11.5 758.8,30.6 737.0,30.6" fill="#ababab" stroke="#868686" stroke-width="0.8" stroke-linejoin="round"/>
<path d="M737.0,24.5 L746.5,27.5 L758.8,27.5" fill="none" stroke="#909090" stroke-width="0.7" stroke-linejoin="round" stroke-linecap="round"/>
<polygon points="740.0,12.5 743.0,9.5 748.0,12.5 748.0,21.5 744.0,23.5 740.0,21.0" fill="#8c8c8c" stroke="#747474" stroke-width="0.6" stroke-linejoin="round"/>
<line x1="743.8" y1="14.0" x2="743.8" y2="23.0" stroke="#7a7a7a" stroke-width="0.6" stroke-linecap="round"/>
<rect x="748.0" y="18" width="10" height="8.6" fill="#e6e6e6" stroke="#a0a0a0" stroke-width=".5"/>
<ellipse cx="753.0" cy="26.6" rx="5.0" ry="1.7" fill="#e0e0e0" stroke="#a0a0a0" stroke-width="0.5"/>
<ellipse cx="753.0" cy="18.0" rx="5.0" ry="2.2" fill="#fafafa" stroke="#a0a0a0" stroke-width="0.5"/>
<polygon points="768.0,19.5 784.5,10.0 790.3,12.0 790.3,30.6 768.0,30.6" fill="#ababab" stroke="#868686" stroke-width="0.8" stroke-linejoin="round"/>
<path d="M768.0,24.5 L777.0,27.8 L790.3,27.8" fill="none" stroke="#909090" stroke-width="0.7" stroke-linejoin="round" stroke-linecap="round"/>
<polygon points="768.3,18.5 771.3,20.0 771.3,23.5 768.3,22.0" fill="#8a8a8a" stroke="#8a8a8a" stroke-width="0.5" stroke-linejoin="round"/>
<polygon points="771.3,20.0 774.3,18.5 774.3,22.0 771.3,23.5" fill="#747474" stroke="#8a8a8a" stroke-width="0.5" stroke-linejoin="round"/>
<polygon points="768.3,18.5 771.3,16.5 774.3,18.5 771.3,20.0" fill="#9a9a9a" stroke="#8a8a8a" stroke-width="0.5" stroke-linejoin="round"/>
<polygon points="776.0,18.5 779.0,20.0 779.0,23.5 776.0,22.0" fill="#f4f4f4" stroke="#8a8a8a" stroke-width="0.5" stroke-linejoin="round"/>
<polygon points="779.0,20.0 782.0,18.5 782.0,22.0 779.0,23.5" fill="#dcdcdc" stroke="#8a8a8a" stroke-width="0.5" stroke-linejoin="round"/>
<polygon points="776.0,18.5 779.0,16.5 782.0,18.5 779.0,20.0" fill="#fafafa" stroke="#8a8a8a" stroke-width="0.5" stroke-linejoin="round"/>
<polygon points="783.0,18.5 786.1,20.0 786.1,23.5 783.0,22.0" fill="#f4f4f4" stroke="#8a8a8a" stroke-width="0.5" stroke-linejoin="round"/>
<polygon points="786.1,20.0 789.3,18.5 789.3,22.0 786.1,23.5" fill="#dcdcdc" stroke="#8a8a8a" stroke-width="0.5" stroke-linejoin="round"/>
<polygon points="783.0,18.5 786.1,16.5 789.3,18.5 786.1,20.0" fill="#fafafa" stroke="#8a8a8a" stroke-width="0.5" stroke-linejoin="round"/>
<polygon points="799.0,20.5 807.0,14.0 813.0,10.0 821.0,12.0 821.3,30.6 799.0,30.6" fill="#ababab" stroke="#868686" stroke-width="0.8" stroke-linejoin="round"/>
<path d="M799.0,25 L808.0,28 L821.3,28" fill="none" stroke="#909090" stroke-width="0.7" stroke-linejoin="round" stroke-linecap="round"/>
<polygon points="807.5,13.2 810.4,14.6 810.4,17.7 807.5,16.3" fill="#f4f4f4" stroke="#8a8a8a" stroke-width="0.5" stroke-linejoin="round"/>
<polygon points="810.4,14.6 813.3,13.2 813.3,16.3 810.4,17.7" fill="#dcdcdc" stroke="#8a8a8a" stroke-width="0.5" stroke-linejoin="round"/>
<polygon points="807.5,13.2 810.4,11.5 813.3,13.2 810.4,14.6" fill="#fafafa" stroke="#8a8a8a" stroke-width="0.5" stroke-linejoin="round"/>
<polygon points="813.8,15.1 816.8,16.5 816.8,19.7 813.8,18.3" fill="#f4f4f4" stroke="#8a8a8a" stroke-width="0.5" stroke-linejoin="round"/>
<polygon points="816.8,16.5 819.8,15.1 819.8,18.3 816.8,19.7" fill="#dcdcdc" stroke="#8a8a8a" stroke-width="0.5" stroke-linejoin="round"/>
<polygon points="813.8,15.1 816.8,13.3 819.8,15.1 816.8,16.5" fill="#fafafa" stroke="#8a8a8a" stroke-width="0.5" stroke-linejoin="round"/>
<polygon points="802.3,17.2 805.1,18.4 805.1,21.2 802.3,20.0" fill="#f4f4f4" stroke="#8a8a8a" stroke-width="0.5" stroke-linejoin="round"/>
<polygon points="805.1,18.4 807.9,17.2 807.9,20.0 805.1,21.2" fill="#dcdcdc" stroke="#8a8a8a" stroke-width="0.5" stroke-linejoin="round"/>
<polygon points="802.3,17.2 805.1,15.6 807.9,17.2 805.1,18.4" fill="#fafafa" stroke="#8a8a8a" stroke-width="0.5" stroke-linejoin="round"/>
<polygon points="814.6,20.7 817.4,22.0 817.4,25.0 814.6,23.7" fill="#f4f4f4" stroke="#8a8a8a" stroke-width="0.5" stroke-linejoin="round"/>
<polygon points="817.4,22.0 820.2,20.7 820.2,23.7 817.4,25.0" fill="#dcdcdc" stroke="#8a8a8a" stroke-width="0.5" stroke-linejoin="round"/>
<polygon points="814.6,20.7 817.4,19.0 820.2,20.7 817.4,22.0" fill="#fafafa" stroke="#8a8a8a" stroke-width="0.5" stroke-linejoin="round"/>
<polygon points="808.0,22.8 811.0,24.2 811.0,27.4 808.0,26.0" fill="#f4f4f4" stroke="#8a8a8a" stroke-width="0.5" stroke-linejoin="round"/>
<polygon points="811.0,24.2 814.0,22.8 814.0,26.0 811.0,27.4" fill="#dcdcdc" stroke="#8a8a8a" stroke-width="0.5" stroke-linejoin="round"/>
<polygon points="808.0,22.8 811.0,21.0 814.0,22.8 811.0,24.2" fill="#fafafa" stroke="#8a8a8a" stroke-width="0.5" stroke-linejoin="round"/>
<polygon points="802.0,22.0 804.8,23.4 804.8,26.6 802.0,25.2" fill="#8a8a8a" stroke="#8a8a8a" stroke-width="0.5" stroke-linejoin="round"/>
<polygon points="804.8,23.4 807.6,22.0 807.6,25.2 804.8,26.6" fill="#747474" stroke="#8a8a8a" stroke-width="0.5" stroke-linejoin="round"/>
<polygon points="802.0,22.0 804.8,20.2 807.6,22.0 804.8,23.4" fill="#9a9a9a" stroke="#8a8a8a" stroke-width="0.5" stroke-linejoin="round"/>
<polygon points="830.0,21.0 839.0,14.0 844.0,9.5 852.3,12.0 852.3,30.6 830.0,30.6" fill="#ababab" stroke="#868686" stroke-width="0.8" stroke-linejoin="round"/>
<polygon points="839.0,12.8 845.5,15.8 845.5,22.5 839.0,19.5" fill="#dedede" stroke="#9a9a9a" stroke-width="0.5" stroke-linejoin="round"/>
<polygon points="845.5,15.8 852.0,12.8 852.0,19.5 845.5,22.5" fill="#cacaca" stroke="#9a9a9a" stroke-width="0.5" stroke-linejoin="round"/>
<polygon points="839.0,12.8 845.5,9.0 852.0,12.8 845.5,15.8" fill="#e8e8e8" stroke="#9a9a9a" stroke-width="0.5" stroke-linejoin="round"/>
<polygon points="832.0,12.3 835.2,13.8 835.2,17.0 832.0,15.6" fill="#e2e2e2" stroke="#9a9a9a" stroke-width="0.5" stroke-linejoin="round"/>
<polygon points="835.2,13.8 838.5,12.3 838.5,15.6 835.2,17.0" fill="#cfcfcf" stroke="#9a9a9a" stroke-width="0.5" stroke-linejoin="round"/>
<polygon points="832.0,12.3 835.2,10.5 838.5,12.3 835.2,13.8" fill="#ededed" stroke="#9a9a9a" stroke-width="0.5" stroke-linejoin="round"/>
<polygon points="842.5,22.9 846.8,24.8 846.8,29.0 842.5,27.1" fill="#f4f4f4" stroke="#8a8a8a" stroke-width="0.5" stroke-linejoin="round"/>
<polygon points="846.8,24.8 851.0,22.9 851.0,27.1 846.8,29.0" fill="#dcdcdc" stroke="#8a8a8a" stroke-width="0.5" stroke-linejoin="round"/>
<polygon points="842.5,22.9 846.8,20.5 851.0,22.9 846.8,24.8" fill="#fafafa" stroke="#8a8a8a" stroke-width="0.5" stroke-linejoin="round"/>
<polygon points="835.3,23.1 839.0,24.8 839.0,28.6 835.3,26.9" fill="#8a8a8a" stroke="#8a8a8a" stroke-width="0.5" stroke-linejoin="round"/>
<polygon points="839.0,24.8 842.8,23.1 842.8,26.9 839.0,28.6" fill="#747474" stroke="#8a8a8a" stroke-width="0.5" stroke-linejoin="round"/>
<polygon points="835.3,23.1 839.0,21.0 842.8,23.1 839.0,24.8" fill="#9a9a9a" stroke="#8a8a8a" stroke-width="0.5" stroke-linejoin="round"/>
<rect x="858.0" y="3" width="1" height="33" fill="#c4c4c4"/><rect x="859.0" y="3" width="1" height="33" fill="#fbfbfb"/>
<rect x="864.0" y="7.5" width="1.6" height="1.6" fill="#a8a8a8"/>
<rect x="862.8" y="8.8" width="1.3" height="1.3" fill="#ffffff"/>
<rect x="864.0" y="11.5" width="1.6" height="1.6" fill="#a8a8a8"/>
<rect x="862.8" y="12.8" width="1.3" height="1.3" fill="#ffffff"/>
<rect x="864.0" y="15.5" width="1.6" height="1.6" fill="#a8a8a8"/>
<rect x="862.8" y="16.8" width="1.3" height="1.3" fill="#ffffff"/>
<rect x="864.0" y="19.5" width="1.6" height="1.6" fill="#a8a8a8"/>
<rect x="862.8" y="20.8" width="1.3" height="1.3" fill="#ffffff"/>
<rect x="864.0" y="23.5" width="1.6" height="1.6" fill="#a8a8a8"/>
<rect x="862.8" y="24.8" width="1.3" height="1.3" fill="#ffffff"/>
<rect x="864.0" y="27.5" width="1.6" height="1.6" fill="#a8a8a8"/>
<rect x="862.8" y="28.8" width="1.3" height="1.3" fill="#ffffff"/>
<rect x="864.0" y="31.5" width="1.6" height="1.6" fill="#a8a8a8"/>
<rect x="862.8" y="32.8" width="1.3" height="1.3" fill="#ffffff"/>
<polygon points="904.6,13.8 912.2,9.6 926.0,11.1 926.0,24.0 918.4,30.4 904.6,27.6" fill="#ffffff"/>
<line x1="912.2" y1="22.6" x2="912.2" y2="9.6" stroke="#0e7e88" stroke-width="1.1" stroke-linecap="round"/>
<line x1="912.2" y1="22.6" x2="926.0" y2="24.0" stroke="#0e7e88" stroke-width="1.1" stroke-linecap="round"/>
<line x1="912.2" y1="22.6" x2="904.6" y2="27.6" stroke="#0e7e88" stroke-width="1.1" stroke-linecap="round"/>
<polygon points="904.6,13.8 918.4,16.6 918.4,30.4 904.6,27.6" fill="#1fd2d8"/>
<polygon points="904.6,13.8 918.4,16.6 918.4,30.4 904.6,27.6" fill="none" stroke="#0e7e88" stroke-width="1.7" stroke-linejoin="round"/>
<polygon points="904.6,13.8 912.2,9.6 926.0,11.1 918.4,16.6" fill="none" stroke="#0e7e88" stroke-width="1.7" stroke-linejoin="round"/>
<polygon points="918.4,16.6 926.0,11.1 926.0,24.0 918.4,30.4" fill="none" stroke="#0e7e88" stroke-width="1.7" stroke-linejoin="round"/>
<polygon points="935.6,13.8 943.2,9.6 957.0,11.1 957.0,24.0 949.4,30.4 935.6,27.6" fill="#ffffff"/>
<line x1="943.2" y1="22.6" x2="943.2" y2="9.6" stroke="#0e7e88" stroke-width="1.1" stroke-linecap="round"/>
<line x1="943.2" y1="22.6" x2="957.0" y2="24.0" stroke="#0e7e88" stroke-width="1.1" stroke-linecap="round"/>
<line x1="943.2" y1="22.6" x2="935.6" y2="27.6" stroke="#0e7e88" stroke-width="1.1" stroke-linecap="round"/>
<polygon points="935.6,13.8 943.2,9.6 957.0,11.1 949.4,16.6" fill="#1fd2d8"/>
<polygon points="935.6,13.8 949.4,16.6 949.4,30.4 935.6,27.6" fill="none" stroke="#0e7e88" stroke-width="1.7" stroke-linejoin="round"/>
<polygon points="935.6,13.8 943.2,9.6 957.0,11.1 949.4,16.6" fill="none" stroke="#0e7e88" stroke-width="1.7" stroke-linejoin="round"/>
<polygon points="949.4,16.6 957.0,11.1 957.0,24.0 949.4,30.4" fill="none" stroke="#0e7e88" stroke-width="1.7" stroke-linejoin="round"/>
<polygon points="966.6,13.8 974.2,9.6 988.0,11.1 988.0,24.0 980.4,30.4 966.6,27.6" fill="#ffffff"/>
<line x1="974.2" y1="22.6" x2="974.2" y2="9.6" stroke="#0e7e88" stroke-width="1.1" stroke-linecap="round"/>
<line x1="974.2" y1="22.6" x2="988.0" y2="24.0" stroke="#0e7e88" stroke-width="1.1" stroke-linecap="round"/>
<line x1="974.2" y1="22.6" x2="966.6" y2="27.6" stroke="#0e7e88" stroke-width="1.1" stroke-linecap="round"/>
<polygon points="980.4,16.6 988.0,11.1 988.0,24.0 980.4,30.4" fill="#1fd2d8"/>
<polygon points="966.6,13.8 980.4,16.6 980.4,30.4 966.6,27.6" fill="none" stroke="#0e7e88" stroke-width="1.7" stroke-linejoin="round"/>
<polygon points="966.6,13.8 974.2,9.6 988.0,11.1 980.4,16.6" fill="none" stroke="#0e7e88" stroke-width="1.7" stroke-linejoin="round"/>
<polygon points="980.4,16.6 988.0,11.1 988.0,24.0 980.4,30.4" fill="none" stroke="#0e7e88" stroke-width="1.7" stroke-linejoin="round"/>
<polygon points="997.6,13.8 1005.2,9.6 1019.0,11.1 1019.0,24.0 1011.4,30.4 997.6,27.6" fill="#ffffff"/>
<polygon points="1005.2,9.6 1019.0,11.1 1019.0,24.0 1005.2,22.6" fill="#1fd2d8"/>
<line x1="1005.2" y1="22.6" x2="1005.2" y2="9.6" stroke="#0e7e88" stroke-width="1.1" stroke-linecap="round"/>
<line x1="1005.2" y1="22.6" x2="1019.0" y2="24.0" stroke="#0e7e88" stroke-width="1.1" stroke-linecap="round"/>
<line x1="1005.2" y1="22.6" x2="997.6" y2="27.6" stroke="#0e7e88" stroke-width="1.1" stroke-linecap="round"/>
<polygon points="997.6,13.8 1011.4,16.6 1011.4,30.4 997.6,27.6" fill="none" stroke="#0e7e88" stroke-width="1.7" stroke-linejoin="round"/>
<polygon points="997.6,13.8 1005.2,9.6 1019.0,11.1 1011.4,16.6" fill="none" stroke="#0e7e88" stroke-width="1.7" stroke-linejoin="round"/>
<polygon points="1011.4,16.6 1019.0,11.1 1019.0,24.0 1011.4,30.4" fill="none" stroke="#0e7e88" stroke-width="1.7" stroke-linejoin="round"/>
<polygon points="1028.6,13.8 1036.2,9.6 1050.0,11.1 1050.0,24.0 1042.4,30.4 1028.6,27.6" fill="#ffffff"/>
<polygon points="1028.6,27.6 1036.2,22.6 1050.0,24.0 1042.4,30.4" fill="#1fd2d8"/>
<line x1="1036.2" y1="22.6" x2="1036.2" y2="9.6" stroke="#0e7e88" stroke-width="1.1" stroke-linecap="round"/>
<line x1="1036.2" y1="22.6" x2="1050.0" y2="24.0" stroke="#0e7e88" stroke-width="1.1" stroke-linecap="round"/>
<line x1="1036.2" y1="22.6" x2="1028.6" y2="27.6" stroke="#0e7e88" stroke-width="1.1" stroke-linecap="round"/>
<polygon points="1028.6,13.8 1042.4,16.6 1042.4,30.4 1028.6,27.6" fill="none" stroke="#0e7e88" stroke-width="1.7" stroke-linejoin="round"/>
<polygon points="1028.6,13.8 1036.2,9.6 1050.0,11.1 1042.4,16.6" fill="none" stroke="#0e7e88" stroke-width="1.7" stroke-linejoin="round"/>
<polygon points="1042.4,16.6 1050.0,11.1 1050.0,24.0 1042.4,30.4" fill="none" stroke="#0e7e88" stroke-width="1.7" stroke-linejoin="round"/>
<polygon points="1059.6,13.8 1067.2,9.6 1081.0,11.1 1081.0,24.0 1073.4,30.4 1059.6,27.6" fill="#ffffff"/>
<polygon points="1059.6,13.8 1067.2,9.6 1067.2,22.6 1059.6,27.6" fill="#1fd2d8"/>
<line x1="1067.2" y1="22.6" x2="1067.2" y2="9.6" stroke="#0e7e88" stroke-width="1.1" stroke-linecap="round"/>
<line x1="1067.2" y1="22.6" x2="1081.0" y2="24.0" stroke="#0e7e88" stroke-width="1.1" stroke-linecap="round"/>
<line x1="1067.2" y1="22.6" x2="1059.6" y2="27.6" stroke="#0e7e88" stroke-width="1.1" stroke-linecap="round"/>
<polygon points="1059.6,13.8 1073.4,16.6 1073.4,30.4 1059.6,27.6" fill="none" stroke="#0e7e88" stroke-width="1.7" stroke-linejoin="round"/>
<polygon points="1059.6,13.8 1067.2,9.6 1081.0,11.1 1073.4,16.6" fill="none" stroke="#0e7e88" stroke-width="1.7" stroke-linejoin="round"/>
<polygon points="1073.4,16.6 1081.0,11.1 1081.0,24.0 1073.4,30.4" fill="none" stroke="#0e7e88" stroke-width="1.7" stroke-linejoin="round"/>
<polygon points="873.6,14.3 884.0,9.3 895.0,14.3 895.0,25.6 884.0,30.7 873.6,25.6" fill="#ffffff" stroke="#0e7e88" stroke-width="1.8" stroke-linejoin="round"/>
<path d="M873.6,14.3 L884.0,19.2 L895.0,14.3 M884.0,19.2 L884.0,30.7 M884.0,9.3 L884.0,19" fill="none" stroke="#0e7e88" stroke-width="1.7" stroke-linejoin="round" stroke-linecap="round"/>
<path d="M873.6,25.6 L884.0,20.5 L895.0,25.6" fill="none" stroke="#0e7e88" stroke-width="0.7" stroke-linejoin="round" stroke-linecap="round"/>
<ellipse cx="878.7" cy="24.0" rx="1.6" ry="0.9" fill="#0e7e88" transform="rotate(-25 878.7 24.0)"/>
<ellipse cx="889.0" cy="23.6" rx="1.6" ry="0.9" fill="#0e7e88" transform="rotate(10 889.0 23.6)"/>
<ellipse cx="943.5" cy="19.5" rx="1.2" ry="1.9" fill="none" stroke="#0e7e88" stroke-width="1"/>
<ellipse cx="940.0" cy="25.0" rx="1.7" ry="0.9" fill="#0e7e88" transform="rotate(-35 940.0 25.0)"/>
<line x1="945.5" y1="22.8" x2="947.5" y2="23.2" stroke="#0e7e88" stroke-width="1.2" stroke-linecap="round"/>
<ellipse cx="974.5" cy="19.5" rx="1.2" ry="1.9" fill="none" stroke="#0e7e88" stroke-width="1"/>
<ellipse cx="971.0" cy="25.0" rx="1.7" ry="0.9" fill="#0e7e88" transform="rotate(-35 971.0 25.0)"/>
<line x1="976.5" y1="22.8" x2="978.5" y2="23.2" stroke="#0e7e88" stroke-width="1.2" stroke-linecap="round"/>
<ellipse cx="1005.5" cy="19.5" rx="1.2" ry="1.9" fill="none" stroke="#0e7e88" stroke-width="1"/>
<ellipse cx="1002.0" cy="25.0" rx="1.7" ry="0.9" fill="#0e7e88" transform="rotate(-35 1002.0 25.0)"/>
<line x1="1007.5" y1="22.8" x2="1009.5" y2="23.2" stroke="#0e7e88" stroke-width="1.2" stroke-linecap="round"/>
<ellipse cx="1037.0" cy="19.0" rx="1.2" ry="1.9" fill="none" stroke="#0e7e88" stroke-width="1"/>
</svg>
<div id="view" class="abs"></div>
<svg class="abs" style="left:0;top:0" width="1245" height="670" viewBox="0 0 1245 670">
<defs><linearGradient id="gL" gradientUnits="userSpaceOnUse" x1="535.6" y1="0" x2="709.6" y2="0"><stop offset="0.0000" stop-color="#060606"/><stop offset="0.0417" stop-color="#4a4a4a"/><stop offset="0.0833" stop-color="#646464"/><stop offset="0.1250" stop-color="#767676"/><stop offset="0.1667" stop-color="#858585"/><stop offset="0.2083" stop-color="#909090"/><stop offset="0.2500" stop-color="#999999"/><stop offset="0.2917" stop-color="#a1a1a1"/><stop offset="0.3333" stop-color="#a6a6a6"/><stop offset="0.3750" stop-color="#ababab"/><stop offset="0.4167" stop-color="#aeaeae"/><stop offset="0.4583" stop-color="#afafaf"/><stop offset="0.5000" stop-color="#b0b0b0"/><stop offset="0.5417" stop-color="#afafaf"/><stop offset="0.5833" stop-color="#aeaeae"/><stop offset="0.6250" stop-color="#ababab"/><stop offset="0.6667" stop-color="#a6a6a6"/><stop offset="0.7083" stop-color="#a1a1a1"/><stop offset="0.7500" stop-color="#999999"/><stop offset="0.7917" stop-color="#909090"/><stop offset="0.8333" stop-color="#858585"/><stop offset="0.8750" stop-color="#767676"/><stop offset="0.9167" stop-color="#646464"/><stop offset="0.9583" stop-color="#4a4a4a"/><stop offset="1.0000" stop-color="#060606"/></linearGradient><linearGradient id="gB" gradientUnits="userSpaceOnUse" x1="870.8" y1="0" x2="1044.7" y2="0"><stop offset="0.0000" stop-color="#060606"/><stop offset="0.0417" stop-color="#4a4a4a"/><stop offset="0.0833" stop-color="#646464"/><stop offset="0.1250" stop-color="#767676"/><stop offset="0.1667" stop-color="#858585"/><stop offset="0.2083" stop-color="#909090"/><stop offset="0.2500" stop-color="#999999"/><stop offset="0.2917" stop-color="#a1a1a1"/><stop offset="0.3333" stop-color="#a6a6a6"/><stop offset="0.3750" stop-color="#ababab"/><stop offset="0.4167" stop-color="#aeaeae"/><stop offset="0.4583" stop-color="#afafaf"/><stop offset="0.5000" stop-color="#b0b0b0"/><stop offset="0.5417" stop-color="#afafaf"/><stop offset="0.5833" stop-color="#aeaeae"/><stop offset="0.6250" stop-color="#ababab"/><stop offset="0.6667" stop-color="#a6a6a6"/><stop offset="0.7083" stop-color="#a1a1a1"/><stop offset="0.7500" stop-color="#999999"/><stop offset="0.7917" stop-color="#909090"/><stop offset="0.8333" stop-color="#858585"/><stop offset="0.8750" stop-color="#767676"/><stop offset="0.9167" stop-color="#646464"/><stop offset="0.9583" stop-color="#4a4a4a"/><stop offset="1.0000" stop-color="#060606"/></linearGradient><linearGradient id="gR" gradientUnits="userSpaceOnUse" x1="977.7" y1="0" x2="1151.7" y2="0"><stop offset="0.0000" stop-color="#060606"/><stop offset="0.0417" stop-color="#4a4a4a"/><stop offset="0.0833" stop-color="#646464"/><stop offset="0.1250" stop-color="#767676"/><stop offset="0.1667" stop-color="#858585"/><stop offset="0.2083" stop-color="#909090"/><stop offset="0.2500" stop-color="#999999"/><stop offset="0.2917" stop-color="#a1a1a1"/><stop offset="0.3333" stop-color="#a6a6a6"/><stop offset="0.3750" stop-color="#ababab"/><stop offset="0.4167" stop-color="#aeaeae"/><stop offset="0.4583" stop-color="#afafaf"/><stop offset="0.5000" stop-color="#b0b0b0"/><stop offset="0.5417" stop-color="#afafaf"/><stop offset="0.5833" stop-color="#aeaeae"/><stop offset="0.6250" stop-color="#ababab"/><stop offset="0.6667" stop-color="#a6a6a6"/><stop offset="0.7083" stop-color="#a1a1a1"/><stop offset="0.7500" stop-color="#999999"/><stop offset="0.7917" stop-color="#909090"/><stop offset="0.8333" stop-color="#858585"/><stop offset="0.8750" stop-color="#767676"/><stop offset="0.9167" stop-color="#646464"/><stop offset="0.9583" stop-color="#4a4a4a"/><stop offset="1.0000" stop-color="#060606"/></linearGradient><linearGradient id="gC" gradientUnits="userSpaceOnUse" x1="580.8" y1="309.2" x2="683.1" y2="486.4"><stop offset="0.0000" stop-color="#060606"/><stop offset="0.0417" stop-color="#4a4a4a"/><stop offset="0.0833" stop-color="#646464"/><stop offset="0.1250" stop-color="#767676"/><stop offset="0.1667" stop-color="#858585"/><stop offset="0.2083" stop-color="#909090"/><stop offset="0.2500" stop-color="#999999"/><stop offset="0.2917" stop-color="#a1a1a1"/><stop offset="0.3333" stop-color="#a6a6a6"/><stop offset="0.3750" stop-color="#ababab"/><stop offset="0.4167" stop-color="#aeaeae"/><stop offset="0.4583" stop-color="#afafaf"/><stop offset="0.5000" stop-color="#b0b0b0"/><stop offset="0.5417" stop-color="#afafaf"/><stop offset="0.5833" stop-color="#aeaeae"/><stop offset="0.6250" stop-color="#ababab"/><stop offset="0.6667" stop-color="#a6a6a6"/><stop offset="0.7083" stop-color="#a1a1a1"/><stop offset="0.7500" stop-color="#999999"/><stop offset="0.7917" stop-color="#909090"/><stop offset="0.8333" stop-color="#858585"/><stop offset="0.8750" stop-color="#767676"/><stop offset="0.9167" stop-color="#646464"/><stop offset="0.9583" stop-color="#4a4a4a"/><stop offset="1.0000" stop-color="#060606"/></linearGradient></defs>
<path d="M535.6,279.2 A87.0,50.2 0 0 0 560.9,314.6 L560.9,365.6 A87.0,50.2 0 0 1 535.6,330.2 Z" fill="url(#gL)"/>
<path d="M560.9,314.6 L896.1,509.5 L896.1,560.5 L560.9,365.6 Z" fill="#808080"/>
<path d="M896.1,509.5 A87.0,50.2 0 0 0 1042.3,485.9 L1042.3,536.9 A87.0,50.2 0 0 1 896.1,560.5 Z" fill="url(#gB)"/>
<path d="M1042.3,485.9 L1149.2,230.9 L1149.2,281.9 L1042.3,536.9 Z" fill="#2d2d2d"/>
<path d="M1149.2,230.9 A87.0,50.2 0 0 0 1151.7,219.1 L1151.7,270.1 A87.0,50.2 0 0 1 1149.2,281.9 Z" fill="url(#gR)"/>
<path d="M560.9,314.6 L896.1,509.5 A87.0,50.2 0 0 0 1042.3,485.9 L1149.2,230.9 A87.0,50.2 0 0 0 1044.8,170.2 L602.7,230.3 A87.0,50.2 0 0 0 560.9,314.6 Z" fill="#808080"/>
<path d="M560.9,314.6 L656.3,370.0 M800.9,454.1 L896.1,509.5 A87.0,50.2 0 0 0 1042.3,485.9 L1149.2,230.9 A87.0,50.2 0 0 0 1044.8,170.2 L602.7,230.3 A87.0,50.2 0 0 0 560.9,314.6 M535.6,330.2 A87.0,50.2 0 0 0 560.9,365.6 L896.1,560.5 A87.0,50.2 0 0 0 1042.3,536.9 L1149.2,281.9 A87.0,50.2 0 0 0 1151.7,270.1 M560.9,314.6 L560.9,365.6 M896.1,509.5 L896.1,560.5 M1042.3,485.9 L1042.3,536.9 M1149.2,230.9 L1149.2,281.9" fill="none" stroke="#0c0c0c" stroke-width="1.7" stroke-linejoin="round" stroke-linecap="round"/>
<path d="M655.3,369.5 L799.7,453.4" fill="none" stroke="#808080" stroke-width="1.6"/>
<path d="M656.3,370.8 L800.9,454.2 L800.9,383.8 A102.3,59.0 60 0 0 656.3,300.2 Z" fill="#808080"/>
<path d="M800.9,454.2 L800.9,383.8 L969.2,286.6 L969.2,357.1 Z" fill="#808080"/>
<path d="M704.3,439.5 L800.9,383.8 A102.3,59.0 60 0 1 779.7,430.6 L683.1,486.4 A102.3,59.0 60 0 0 704.3,439.5 Z" fill="url(#gC)"/>
<path d="M704.3,439.5 L969.2,286.6 A102.3,59.0 60 0 0 845.7,156.3 L580.8,309.2 A102.3,59.0 60 0 1 704.3,439.5 Z" fill="url(#gC)"/>
<ellipse cx="632.0" cy="397.8" rx="102.3" ry="59.0" transform="rotate(60 632.0 397.8)" fill="#808080" stroke="#0c0c0c" stroke-width="1.7"/>
<path d="M800.9,454.2 L800.9,383.8 L969.2,286.6 L969.2,357.1 Z M969.2,286.6 A102.3,59.0 60 0 0 845.7,156.3 M704.3,439.5 L800.9,383.8" fill="none" stroke="#0c0c0c" stroke-width="1.7" stroke-linejoin="round" stroke-linecap="round"/><text x="525" y="344" font-family="Liberation Sans, sans-serif" font-size="26.8" fill="#d8d432" fill-opacity=".6">Mechnexus.com</text>
</svg>
</body></html>
